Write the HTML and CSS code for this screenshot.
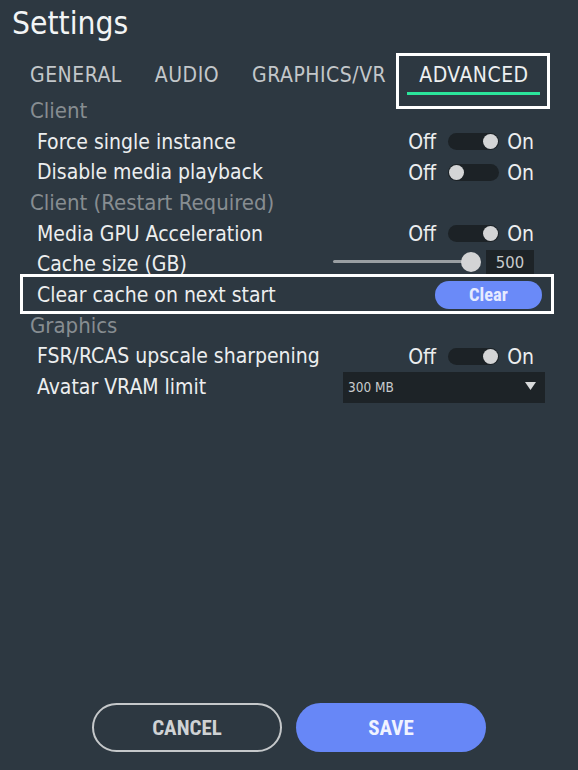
FILE: index.html
```html
<!DOCTYPE html>
<html>
<head>
<meta charset="utf-8">
<title>Settings</title>
<link rel="stylesheet" href="styles.css">
</head>
<body>
<div class="app">
  <h1 class="title">Settings</h1>
  <nav class="tabs">
    <span class="tab">GENERAL</span>
    <span class="tab">AUDIO</span>
    <span class="tab">GRAPHICS/VR</span>
    <span class="tab active">ADVANCED</span>
  </nav>
  <div class="list">
    <div class="section">Client</div>
    <div class="row">
      <span class="label">Force single instance</span>
      <div class="toggle"><span>Off</span><span class="track on"><span class="knob"></span></span><span>On</span></div>
    </div>
    <div class="row">
      <span class="label">Disable media playback</span>
      <div class="toggle"><span>Off</span><span class="track"><span class="knob"></span></span><span>On</span></div>
    </div>
    <div class="section">Client (Restart Required)</div>
    <div class="row">
      <span class="label">Media GPU Acceleration</span>
      <div class="toggle"><span>Off</span><span class="track on"><span class="knob"></span></span><span>On</span></div>
    </div>
    <div class="row">
      <span class="label">Cache size (GB)</span>
      <div class="slider-group">
        <div class="slider"><span class="slider-knob"></span></div>
        <span class="value">500</span>
      </div>
    </div>
    <div class="row focused">
      <span class="label">Clear cache on next start</span>
      <button class="clear-btn">Clear</button>
    </div>
    <div class="section">Graphics</div>
    <div class="row">
      <span class="label">FSR/RCAS upscale sharpening</span>
      <div class="toggle"><span>Off</span><span class="track on"><span class="knob"></span></span><span>On</span></div>
    </div>
    <div class="row">
      <span class="label">Avatar VRAM limit</span>
      <div class="select">
        <span>300 MB</span>
        <svg class="caret" width="11" height="8" viewBox="0 0 11 8"><polygon points="0,0 11,0 5.5,8" fill="#d8dadb"/></svg>
      </div>
    </div>
  </div>
  <div class="footer">
    <button class="btn cancel">CANCEL</button>
    <button class="btn save">SAVE</button>
  </div>
</div>
</body>
</html>
```
FILE: styles.css
```css
* { box-sizing: border-box; }
html, body { margin: 0; padding: 0; }
body {
  background: #2d3841;
  font-family: "DejaVu Sans Condensed", "DejaVu Sans", sans-serif;
  color: #eceeef;
}
.app {
  height: 770px;
  display: flex;
  flex-direction: column;
}
.title {
  margin: 5px 0 0 12px;
  font-size: 31.5px;
  line-height: 37px;
  font-weight: normal;
  color: #f2f4f5;
}
.tabs {
  height: 54px;
  padding: 21px 0 0 30px;
  display: flex;
  gap: 33px;
  font-size: 21px;
  letter-spacing: 0.5px;
  line-height: 24px;
  color: #c3c7ca;
}
.tab { position: relative; height: 24px; }
.tab.active { color: #eef0f1; }
.tab.active::before {
  content: "";
  position: absolute;
  top: -10px; bottom: -22px; left: -23px; right: -21px;
  border: 3px solid #ffffff;
}
.tab.active::after {
  content: "";
  position: absolute;
  top: 29px; height: 3px; left: -12px; right: -11px;
  background: #2be59b;
}
.list {
  display: flex;
  flex-direction: column;
  font-size: 21px;
  padding-right: 44px;
}
.section {
  height: 30.67px;
  line-height: 30.67px;
  padding-left: 30px;
  font-size: 22px;
  color: #878d91;
}
.row {
  position: relative;
  height: 30.67px;
  line-height: 30.67px;
  padding-left: 37px;
  display: flex;
  align-items: center;
  justify-content: space-between;
}
.row.focused::before {
  content: "";
  position: absolute;
  top: -6px; bottom: -3px; left: 20px; right: -20px;
  border: 3px solid #ffffff;
}
.toggle {
  display: flex;
  align-items: center;
  line-height: 24px;
}
.track {
  width: 51px;
  height: 17px;
  border-radius: 9px;
  background: #1c2226;
  padding: 1px;
  display: flex;
  margin: 0 8px 0 12px;
}
.track.on { justify-content: flex-end; }
.knob {
  width: 15px;
  height: 15px;
  border-radius: 50%;
  background: #d4d5d6;
}
.slider-group {
  display: flex;
  align-items: center;
  gap: 5px;
  margin-bottom: 6px;
}
.slider {
  position: relative;
  width: 148px;
  height: 20px;
  display: flex;
  align-items: center;
}
.slider::before {
  content: "";
  display: block;
  width: 136px;
  height: 3px;
  border-radius: 2px;
  background: #9a9fa2;
}
.slider-knob {
  position: absolute;
  right: 0; top: 0;
  width: 20px;
  height: 20px;
  border-radius: 50%;
  background: #d3d4d5;
}
.value {
  width: 48px;
  height: 24px;
  background: #1d2327;
  color: #c9cbcc;
  font-size: 16.5px;
  line-height: 26px;
  text-align: center;
}
.clear-btn {
  width: 107px;
  height: 28px;
  margin-right: -8px;
  border: none;
  border-radius: 14px;
  background: #6a8af8;
  color: #e6ebff;
  font-family: "Roboto Condensed", "DejaVu Sans Condensed", sans-serif;
  font-weight: bold;
  font-size: 18.5px;
  line-height: 28px;
  padding: 0;
}
.select {
  width: 202px;
  height: 31px;
  margin-right: -11px;
  background: #1d2327;
  display: flex;
  align-items: center;
  justify-content: space-between;
  padding: 0 9px 0 5px;
  font-size: 13.5px;
  color: #c8cbcd;
}
.caret { display: block; margin-top: -2px; }
.footer {
  margin-top: auto;
  padding-bottom: 18px;
  display: flex;
  justify-content: center;
  gap: 14px;
}
.btn {
  width: 190px;
  height: 49px;
  border-radius: 25px;
  font-family: "Roboto Condensed", "DejaVu Sans Condensed", sans-serif;
  font-weight: bold;
  font-size: 21px;
  padding: 0;
}
.cancel {
  background: transparent;
  border: 2px solid #c5c8ca;
  color: #cfd2d4;
}
.save {
  background: #6787f7;
  border: none;
  color: #f0f3ff;
}
```
